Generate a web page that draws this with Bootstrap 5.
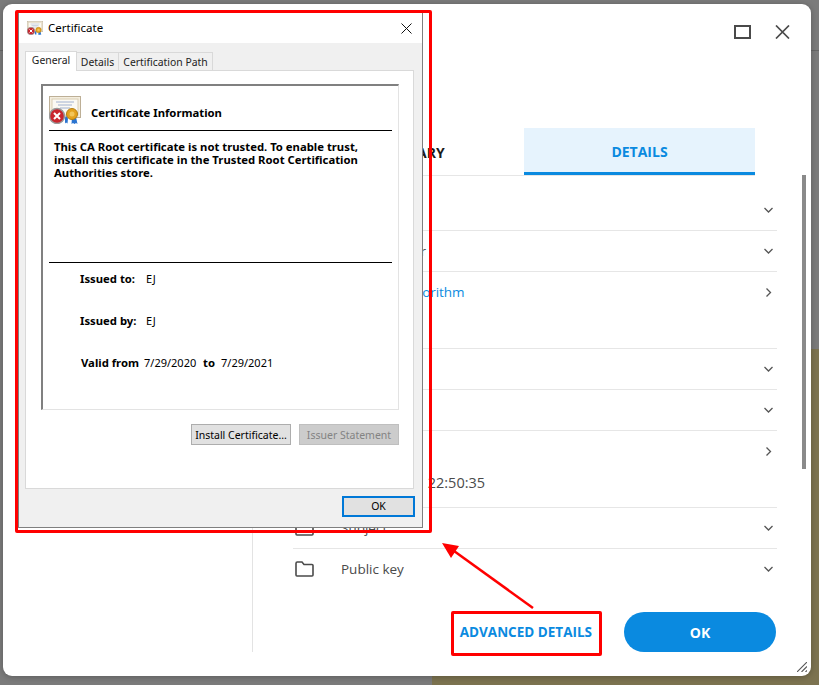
<!DOCTYPE html>
<html lang="en">
<head>
<meta charset="utf-8">
<title>Certificate</title>
<link href="https://cdn.jsdelivr.net/npm/bootstrap@5.3.0/dist/css/bootstrap.min.css" rel="stylesheet">
<style>
html,body{height:685px;overflow:hidden}
body{position:relative;margin:0;padding:4px 8px 9px 3px;font-family:"Open Sans","Noto Sans",sans-serif;color:#4a4a4a;
 background:linear-gradient(#7c7350,#7c7350) right bottom/387px 336px no-repeat,linear-gradient(#666,#666) 0 50px/100% 1px no-repeat,#7b7b7b}
.shell{height:672px;background:#fff;border-radius:9px;box-shadow:0 1px 6px rgba(0,0,0,.25);position:relative}
.side{width:250px;height:618px;margin-top:30px;border-right:1px solid #e3e3e3;box-sizing:content-box}
.pane{width:558px;height:648px;padding:0 34px 0 40px}
.ctl{height:124px;padding-top:21px;margin-right:-13px}
.tabbar{width:462px;height:48px;border-bottom:1px solid #e6e6e6}
.tabitem{width:231px;height:47px;font-size:14px;font-weight:700;color:#1a1a1a;padding-top:2px}
.tabitem.on{background:#e6f3fd;color:#0a8ae0;border-bottom:3px solid #0a8ae0}
.rows .list-group-item{padding:0;border-color:#e6e6e6;color:#4a4a4a;font-size:13.5px;background:transparent}
.rows .list-group-item:first-child{padding-top:14px}
.rowhead{height:40px;padding-left:2px;padding-right:4px}
.rowname{margin-left:27px;flex-grow:1}
.rowname.lnk{color:#0a8ae0;letter-spacing:-.05px}
.rowname.tight{letter-spacing:-.3px}
.rowval{margin-left:54px;height:36px;line-height:22px;font-size:14.5px;padding-top:1px}
.foot{gap:32px;height:40px;margin-top:23px;margin-right:1px}
.advlink{font-size:13.5px;font-weight:700;color:#0a8ae0;text-decoration:none;padding:0;border:0}
.okpill{width:152px;height:40px;background:#0a8ae0;border:0;font-size:14px;font-weight:700;color:#fff}
.thumb{position:absolute;left:799px;top:171px;width:4px;height:294px;background:#8a8a8a}
.grip{position:absolute;left:794px;top:658px}
.redframe{position:absolute;border:3px solid #f00;border-radius:2px}
.rf-a{left:15px;top:10px;width:417px;height:523px}
.rf-b{left:451px;top:611px;width:151px;height:45px}
.arrow{position:absolute;left:430px;top:530px}
.win{width:405px;height:515px;background:#f0f0f0;border:1px solid #7f7f7f;border-top:0;font-family:"Noto Sans",sans-serif;font-size:11px;color:#000}
.wintitle{height:30px;background:#fff;padding:0 10px 0 8px;font-size:11.5px;gap:5px}
.wintabs{height:27px;padding:7px 0 0 6px;align-items:flex-end;font-size:10.4px}
.wt{height:18px;line-height:18px;border:1px solid #d9d9d9;border-bottom:0;margin-left:-1px;background:#f0f0f0;color:#222;text-align:center}
.wt.on{height:20px;background:#fff;margin:0 0 -1px;position:relative;z-index:1;width:52px;line-height:17px}
.wt-b{width:43px}
.wt-c{width:95px}
.panel{width:389px;height:419px;margin-left:6px;background:#fff;border:1px solid #d9d9d9;padding:13px 14px 0 15px}
.infobox{width:358px;height:326px;border:1px solid #e3e3e3;border-top:2px solid #808080;border-left:2px solid #808080;padding:10px 6px 0 6px}
.head1{height:35px;border-bottom:1px solid #000;gap:10px;padding-bottom:6px}
.bt{font-weight:700;font-size:11.3px}
.headtxt{padding-bottom:2px}
.para{font-weight:700;font-size:11.3px;line-height:13px;padding:9px 12px 0 5px;height:132px;border-bottom:1px solid #000;margin:0}
.kv{height:42px;line-height:14px;padding:9px 0 0 31px}
.kname{width:66px}
.kv-c{padding-left:32px}
.vfrom{width:63px}
.vdate{width:59px}
.vto{width:18px}
.dlgbtns{gap:8px;margin-top:14px}
.wb{width:100px;height:21px;line-height:19px;padding:1px 0 0;border:1px solid #adadad;border-radius:0;background:#e1e1e1;font-size:10.5px;color:#000}
.wb.off{background:#ccc;border-color:#bfbfbf;color:#838383}
.winfoot{padding:7px 7px 0 0}
.wok{width:73px;height:21px;border:2px solid #0078d7;background:#e1e1e1;line-height:17px;padding:0;border-radius:0;font-size:10.5px;color:#000}
</style>
</head>
<body>
<svg width="0" height="0" class="d-block position-absolute">
  <defs>
    <symbol id="fold" viewBox="0 0 19 16"><path d="M1 14V2.5C1 1.7 1.500 1 2.300 1H7L9 3.500H17C17.600 3.500 18 4 18 4.500V14C18 14.600 17.600 15 17 15H2C1.400 15 1 14.600 1 14Z" fill="none" stroke="#4a4a4a" stroke-width="1.600"/></symbol>
    <symbol id="cdown" viewBox="0 0 9 6"><path d="M.5 1 4.500 5 8.500 1" fill="none" stroke="#555" stroke-width="1.300"/></symbol>
    <symbol id="cright" viewBox="0 0 9 9"><path d="M2.500.5 6.500 4.500 2.500 8.500" fill="none" stroke="#555" stroke-width="1.300"/></symbol>
    <symbol id="cert" viewBox="0 0 32 28">
      <rect x=".5" y=".5" width="31" height="21" fill="#f4eedf" stroke="#bdaf96"/>
      <rect x="3" y="3" width="26" height="16" fill="#fbf9f3" stroke="#d9cdb4"/>
      <path d="M7 6h18M9 9h14M11 12h10" stroke="#9fb0d0"/>
      <path d="M16 22.500l1-3 2 3-.500 5-1.500-1-1 1zM23 21l-.5 7 1.500-1 1.500 1 1.500-1 1.500 1L27 21z" fill="#2a74d0"/>
      <circle cx="23" cy="18" r="5.500" fill="#e4a21e" stroke="#b57f12"/>
      <circle cx="23" cy="18" r="2.500" fill="#f3c65a"/>
      <circle cx="8" cy="20" r="7.500" fill="#c9262e" stroke="#9a9a9a" stroke-width="1.500"/>
      <path d="M5 17l6 6M11 17l-6 6" stroke="#fff" stroke-width="2"/>
    </symbol>
  </defs>
</svg>
<div class="shell d-flex">
  <div class="side"></div>
  <div class="pane d-flex flex-column flex-shrink-0">
    <div class="ctl d-flex justify-content-end gap-4">
      <svg width="17" height="14" viewBox="0 0 17 14"><rect x="1" y="1" width="15" height="12" fill="none" stroke="#4a4a4a" stroke-width="2"/></svg>
      <svg width="15" height="14" viewBox="0 0 15 14"><path d="M1 .5 14 13.500M14 .5 1 13.500" fill="none" stroke="#4a4a4a" stroke-width="1.700"/></svg>
    </div>
    <div class="tabbar d-flex">
      <div class="tabitem d-flex align-items-center justify-content-center">SUMMARY</div>
      <div class="tabitem on d-flex align-items-center justify-content-center">DETAILS</div>
    </div>
    <ul class="rows list-group list-group-flush flex-grow-1">
      <li class="list-group-item"><div class="rowhead d-flex align-items-center"><svg width="19" height="16"><use href="#fold"/></svg><span class="rowname">Version</span><svg width="9" height="6"><use href="#cdown"/></svg></div></li>
      <li class="list-group-item"><div class="rowhead d-flex align-items-center"><svg width="19" height="16"><use href="#fold"/></svg><span class="rowname tight">Serial number</span><svg width="9" height="6"><use href="#cdown"/></svg></div></li>
      <li class="list-group-item"><div class="rowhead d-flex align-items-center"><svg width="19" height="16"><use href="#fold"/></svg><span class="rowname lnk">Signature algorithm</span><svg width="9" height="9"><use href="#cright"/></svg></div><div class="rowval">sha256RSA</div></li>
      <li class="list-group-item"><div class="rowhead d-flex align-items-center"><svg width="19" height="16"><use href="#fold"/></svg><span class="rowname">Issuer</span><svg width="9" height="6"><use href="#cdown"/></svg></div></li>
      <li class="list-group-item"><div class="rowhead d-flex align-items-center"><svg width="19" height="16"><use href="#fold"/></svg><span class="rowname">Valid from</span><svg width="9" height="6"><use href="#cdown"/></svg></div></li>
      <li class="list-group-item"><div class="rowhead d-flex align-items-center"><svg width="19" height="16"><use href="#fold"/></svg><span class="rowname">Valid to</span><svg width="9" height="9"><use href="#cright"/></svg></div><div class="rowval">07/29/2021 22:50:35</div></li>
      <li class="list-group-item"><div class="rowhead d-flex align-items-center"><svg width="19" height="16"><use href="#fold"/></svg><span class="rowname">Subject</span><svg width="9" height="6"><use href="#cdown"/></svg></div></li>
      <li class="list-group-item"><div class="rowhead d-flex align-items-center"><svg width="19" height="16"><use href="#fold"/></svg><span class="rowname">Public key</span><svg width="9" height="6"><use href="#cdown"/></svg></div></li>
    </ul>
    <div class="foot d-flex justify-content-end align-items-center">
      <a class="advlink" href="#">ADVANCED DETAILS</a>
      <button class="btn okpill rounded-pill" type="button">OK</button>
    </div>
  </div>
  <div class="thumb"></div>
  <svg class="grip" width="10" height="10" viewBox="0 0 10 10"><path d="M0 10 10 0M4.500 10 10 4.500M8.500 10 10 8.500" stroke="#555" stroke-width="1.100"/></svg>
</div>

<div class="redframe rf-a">
  <div class="win d-flex flex-column">
    <div class="wintitle d-flex align-items-center">
      <svg width="16" height="14"><use href="#cert"/></svg>
      <span class="flex-grow-1">Certificate</span>
      <svg width="11" height="11" viewBox="0 0 11 11"><path d="M.5.500 10.500 10.500M10.500.500.500 10.500" stroke="#111" fill="none"/></svg>
    </div>
    <div class="wintabs d-flex">
      <div class="wt on">General</div><div class="wt wt-b">Details</div><div class="wt wt-c">Certification Path</div>
    </div>
    <div class="panel">
      <div class="infobox">
        <div class="head1 d-flex align-items-end">
          <svg width="32" height="28"><use href="#cert"/></svg>
          <span class="bt headtxt">Certificate Information</span>
        </div>
        <p class="para">This CA Root certificate is not trusted. To enable trust, install this certificate in the Trusted Root Certification Authorities store.</p>
        <div class="kv d-flex"><span class="bt kname">Issued to:</span><span>EJ</span></div>
        <div class="kv d-flex"><span class="bt kname">Issued by:</span><span>EJ</span></div>
        <div class="kv kv-c d-flex"><span class="bt vfrom">Valid from</span><span class="vdate">7/29/2020</span><span class="bt vto">to</span><span>7/29/2021</span></div>
      </div>
      <div class="dlgbtns d-flex justify-content-end">
        <button class="btn wb" type="button">Install Certificate...</button>
        <button class="btn wb off" type="button">Issuer Statement</button>
      </div>
    </div>
    <div class="winfoot d-flex justify-content-end">
      <button class="btn wok" type="button">OK</button>
    </div>
  </div>
</div>
<div class="redframe rf-b"></div>
<svg class="arrow" width="110" height="85" viewBox="0 0 110 85"><path d="M103 78 24 21" stroke="#f00" stroke-width="2.500"/><path d="M12 13 29 16 21 28z" fill="#f00"/></svg>
</body>
</html>
